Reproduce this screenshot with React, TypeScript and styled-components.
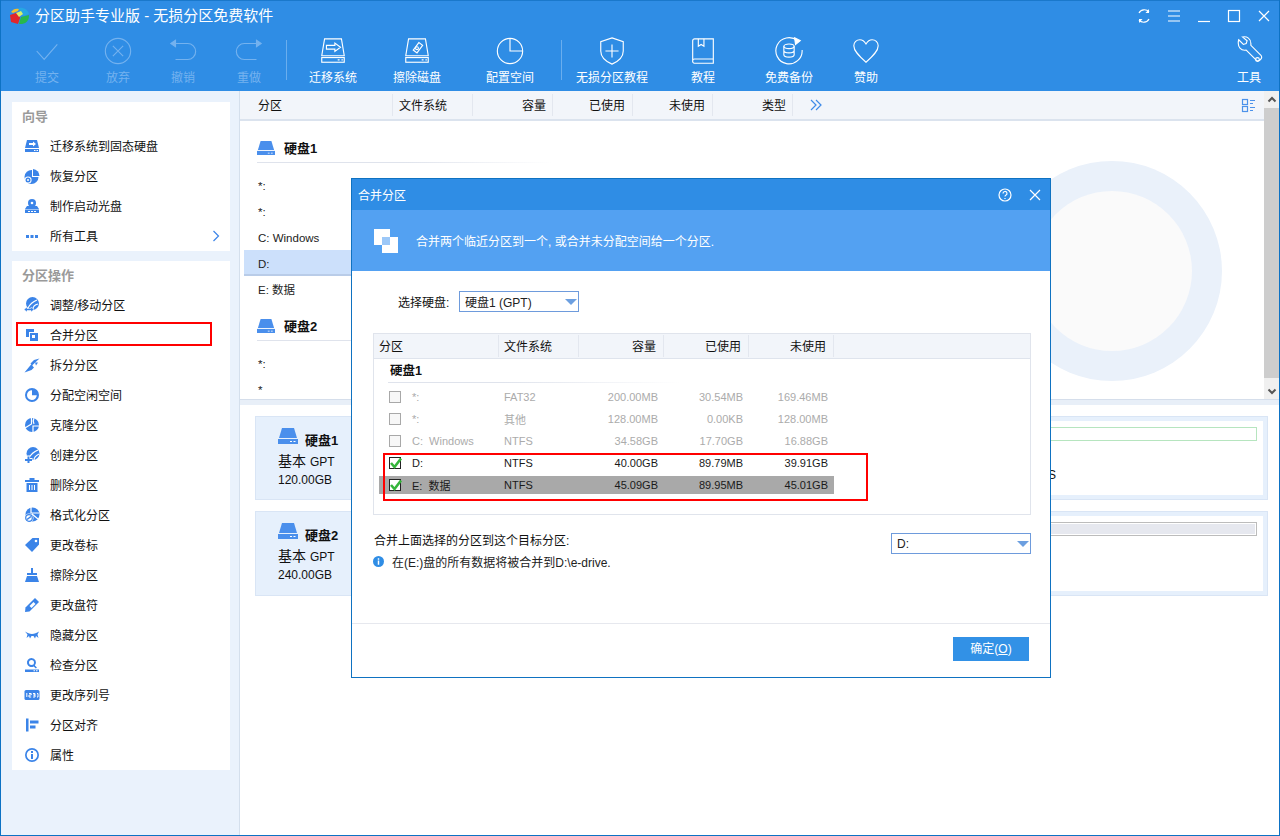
import React from 'react';
import styled, { createGlobalStyle } from 'styled-components';

const Global = createGlobalStyle`
  html, body { margin: 0; padding: 0; background: #fff; }
  * { box-sizing: border-box; }
  body { font-family: "Liberation Sans", "Noto Sans CJK SC", sans-serif; font-size: 12px; color: #111; }
`;

const Page = styled.div`
  position: relative; width: 1280px; height: 836px; overflow: hidden;
  display: flex; flex-direction: column; background: #fff;
  border-left: 1px solid #0d72c4; border-right: 1px solid #0d72c4; border-bottom: 1px solid #0d72c4;
`;
const Header = styled.header`
  height: 91px; flex: none; background: #2f8de5; border-top: 1px solid #1a78cb; color: #fff;
`;
const TitleRow = styled.div`display: flex; align-items: center; height: 30px; padding-left: 7px;`;
const Title = styled.div`font-size: 15px; margin-left: 5px; line-height: 30px; color: #fff;`;
const WindowControls = styled.div`display: flex; margin-left: auto; padding-right: 0;`;
const WindowButton = styled.div`width: 30px; height: 30px; display: flex; align-items: center; justify-content: center;`;
const Toolbar = styled.div`display: flex; align-items: flex-start; padding: 5px 0 0 11px;`;
const Tool = styled.div<{ $w: number; $off?: boolean; $ml?: number }>`
  width: ${p => p.$w}px; margin-left: ${p => p.$ml || 0}px; flex: none;
  display: flex; flex-direction: column; align-items: center;
  color: ${p => (p.$off ? '#74b2ef' : '#fff')};
`;
const ToolLabel = styled.div`margin-top: 4px; line-height: 16px; font-size: 12px; white-space: nowrap;`;
const ToolSep = styled.div`width: 1px; height: 40px; margin-top: 4px; flex: none; background: #6aaeee;`;
const ToolSpring = styled.div`flex: 1;`;

const Body = styled.div`flex: 1; display: flex; min-height: 0;`;
const Sidebar = styled.aside`
  width: 239px; flex: none; background: #eaf2fc; border-right: 1px solid #d4dfec; padding: 11px 0 0 11px;
  display: flex; flex-direction: column; gap: 10px;
`;
const SideCard = styled.section`width: 218px; background: #fff;`;
const SideTitle = styled.div`height: 29px; line-height: 30px; padding-left: 10px; font-size: 13px; font-weight: 700; color: #9a9a9a;`;
const SideRow = styled.div`
  position: relative; height: 30px; display: flex; align-items: center; padding-left: 12px; gap: 10px; color: #111; white-space: nowrap;
`;
const SideLabel = styled.span`margin-top: -2px;`;
const SideChevron = styled.span`margin-left: auto; margin-right: 8px; display: flex; color: #3b84e8;`;
const SideMark = styled.div`position: absolute; left: 4px; top: 2px; width: 196px; height: 24px; border: 2px solid #f00;`;

const Main = styled.main`flex: 1; display: flex; flex-direction: column; min-width: 0;`;
const ListArea = styled.div`height: 309px; flex: none; display: flex; border-bottom: 1px solid #d5deeb;`;
const ListLeft = styled.div`flex: 1; min-width: 0; display: flex; flex-direction: column;`;
const ColumnBar = styled.div`height: 30px; flex: none; display: flex; align-items: center; background: #f2f5fa; border-bottom: 2px solid #dbe3ee;`;
const ColumnCell = styled.div<{ $w: number; $right?: boolean; $pad: number }>`
  width: ${p => p.$w}px; height: 22px; line-height: 24px; flex: none; border-right: 1px solid #e3e7ef;
  text-align: ${p => (p.$right ? 'right' : 'left')};
  ${p => (p.$right ? `padding-right: ${p.$pad}px;` : `padding-left: ${p.$pad}px;`)}
`;
const ColumnMore = styled.div`margin-left: 16px; display: flex; color: #3f8be8;`;
const ColumnView = styled.div`margin-left: auto; margin-right: 8px; display: flex; color: #4c92ea;`;
const ListPane = styled.div`flex: 1; display: flex; min-height: 0; overflow: hidden;`;
const ListColumn = styled.div`flex: 1; padding: 17px 0 0 4px; min-width: 0;`;
const DiskHead = styled.div`
  height: 25px; margin-left: 13px; width: 295px; display: flex; align-items: flex-start; gap: 9px; position: relative;
  font-weight: 700; font-size: 13px; line-height: 22px;
  border-bottom: 1px solid; border-image: linear-gradient(90deg, #dfe3ec 50%, #fff) 1;
`;
const DiskHeadIcon = styled.span<{ $top?: number }>`display: flex; color: #4a8fec; margin-top: ${p => p.$top ?? 3}px;`;
const ListGroup = styled.div`margin: 9px 0 14px;`;
const ListRow = styled.div<{ $on?: boolean }>`
  height: 26px; line-height: 28px; padding-left: 14px; color: #222; font-size: 11.5px;
  ${p => p.$on && 'background: #cce0fb; border-bottom: 2px solid #b9cce8;'}
`;
const ChartWrap = styled.div`flex: none; margin: 40px 42px 0 0;`;

const ScrollBar = styled.div`width: 15px; flex: none; background: #f0f0f0; display: flex; flex-direction: column; color: #555;`;
const ScrollBtn = styled.div`height: 17px; display: flex; align-items: center; justify-content: center; flex: none;`;
const ScrollThumb = styled.div`flex: 1; background: #cdcdcd; margin-bottom: 4px;`;
const DiskCards = styled.div`
  flex: 1; padding: 11px 11px 0 15px; display: flex; flex-direction: column; gap: 11px;
  border-top: 5px solid #e8eff8; position: relative;
`;
const DiskCard = styled.div<{ $h: number }>`
  height: ${p => p.$h}px; display: flex; background: #e6f0fc; border: 1px solid #d9e5f5; padding: 4px 4px 4px 0;
`;
const DiskInfo = styled.div`width: 95px; flex: none; padding: 9px 0 0 22px;`;
const DiskName = styled.div`display: flex; align-items: flex-start; gap: 7px; font-size: 13px; font-weight: 700; line-height: 22px; color: #111;`;
const DiskType = styled.div`font-size: 14px; line-height: 19px; margin-top: 0; white-space: nowrap;`;
const DiskTypeLatin = styled.span`font-size: 12px; margin-left: 4px;`;
const DiskSize = styled.div`font-size: 12px; line-height: 16px;`;
const DiskMap = styled.div`flex: 1; background: #fff; padding: 6px 6px 0 0;`;
const Bar = styled.div<{ $grey?: boolean }>`
  height: 14px; border: 1px solid ${p => (p.$grey ? '#bcbcbc' : '#b6e5bf')};
  background: ${p => (p.$grey ? '#e6e8ef' : '#fff')};
  ${p => p.$grey && 'box-shadow: inset 0 0 0 1px #fff;'}
`;
const MapLabel = styled.div`text-align: right; padding-right: 201px; margin-top: 26px; line-height: 16px; font-size: 12px;`;

const Modal = styled.div`
  position: absolute; left: 350px; top: 178px; width: 700px; height: 500px;
  background: #fff; border: 1px solid #0f72c1; display: flex; flex-direction: column;
`;
const ModalTitle = styled.div`height: 31px; flex: none; background: #2f8de5; color: #fff; display: flex; align-items: center; padding-left: 6px; font-size: 12px;`;
const ModalActions = styled.div`margin-left: auto; display: flex; align-items: center; gap: 16px; padding-right: 8px;`;
const Banner = styled.div`height: 61px; flex: none; background: #53a1f2; color: #fff; display: flex; align-items: center; padding-left: 21px; gap: 17px; font-size: 12px;`;
const ModalBody = styled.div`padding: 20px 19px 0 21px; flex: 1;`;
const DiskPick = styled.div`display: flex; align-items: center; padding-left: 25px; height: 21px;`;
const PickLabel = styled.div`width: 61px; flex: none;`;
const Select = styled.div<{ $w: number }>`
  width: ${p => p.$w}px; height: 21px; border: 1px solid #6e9bdc; display: flex; align-items: center; padding: 0 1px 0 5px; color: #222; flex: none;
`;
const SelectCaret = styled.span`
  margin-left: auto; width: 0; height: 0; border-left: 6px solid transparent; border-right: 6px solid transparent; border-top: 6px solid #6c9fe0;
`;
const Table = styled.div`margin-top: 21px; width: 658px; height: 182px; border: 1px solid #e0e4ec;`;
const TableHead = styled.div`height: 25px; display: flex; align-items: center; background: #f2f5fa; border-bottom: 1px solid #dfe4ed;`;
const TableGroup = styled.div`
  height: 24px; margin-left: 14px; width: 292px; padding-left: 2px; line-height: 25px; font-weight: 700; font-size: 12.5px;
  border-bottom: 1px solid; border-image: linear-gradient(90deg, #dfe3ec 40%, #fff) 1;
`;
const TableRows = styled.div`margin: 5px 0 0 5px; width: 455px; display: flex; flex-direction: column; gap: 4px;`;
const TableRow = styled.div<{ $off?: boolean; $sel?: boolean }>`
  height: 18px; display: grid; grid-template-columns: 33px 92px 75px 85px 85px 85px; align-items: center; font-size: 11px;
  color: ${p => (p.$off ? '#ababab' : '#1a1a1a')};
  background: ${p => (p.$sel ? '#a9a9a9' : 'transparent')};
`;
const NameCell = styled.span`white-space: pre;`;
const CheckCell = styled.span`padding-left: 10px; display: flex;`;
const CheckBox = styled.span<{ $on?: boolean }>`
  width: 12px; height: 12px; display: block; position: relative; flex: none;
  border: 1px solid ${p => (p.$on ? '#222' : '#a8a8a8')}; background: ${p => (p.$on ? '#fff' : '#f7f7f7')};
`;
const CheckMark = styled.svg`position: absolute; left: -1px; top: -2px;`;
const NumCell = styled.span`text-align: right; padding-right: 6px;`;
const MergeRow = styled.div`margin-top: 18px; width: 658px; display: flex; justify-content: space-between; align-items: center; height: 21px; padding-left: 1px;`;
const MergeLabel = styled.span`margin-top: -9px;`;
const InfoRow = styled.div`display: flex; align-items: center; gap: 8px; height: 17px; margin-top: -1px; color: #222; font-size: 12px;`;
const ModalFooter = styled.div`height: 54px; flex: none; border-top: 1px solid #e6e8ee; display: flex; justify-content: flex-end; padding: 13px 21px 0 0;`;
const OkButton = styled.div`width: 76px; height: 24px; background: #3291e6; color: #fff; text-align: center; line-height: 24px;`;
const OkKey = styled.span`text-decoration: underline;`;
const DiskMark = styled.div`position: absolute; left: 31px; top: 274px; width: 485px; height: 48px; border: 2px solid #f00;`;

const Ico = styled.svg`display: block; flex: none;`;

const S = ({ children, size = 30, vb = 32 }: { children: React.ReactNode; size?: number; vb?: number }) => (
  <Ico width={size} height={size} viewBox={`0 0 ${vb} ${vb}`} fill="none" stroke="currentColor" strokeWidth={1.2}>{children}</Ico>
);

const DriveBase = () => (<>
  <path d="M7 3h18l3 18H4z" />
  <rect x="4" y="23" width="24" height="5" />
  <path d="M21 25.500h2M25 25.500h1.500" />
</>);

const toolIcons: Record<string, React.ReactNode> = {
  check: <S><path d="M5 16l8 9L27 9" /></S>,
  cancel: <S><circle cx="16" cy="16" r="13.500" /><path d="M10.500 10.500l11 11M21.500 10.500l-11 11" /></S>,
  undo: <S><path d="M8 8h13a8.500 8.500 0 0 1 0 17H8" /><path d="M8 4.500L3 8l5 3.500z" fill="currentColor" /></S>,
  redo: <S><path d="M24 8H11a8.500 8.500 0 0 0 0 17h13" /><path d="M24 4.500L29 8l-5 3.500z" fill="currentColor" /></S>,
  migrate: <S><DriveBase /><path d="M9 10h9V7.500l6 4.500-6 4.500V14H9z" /></S>,
  wipe: <S><DriveBase /><path d="M12 15l6-8 4 3-6 8z" /><circle cx="16" cy="13" r="1.500" /></S>,
  space: <S><circle cx="16" cy="16" r="13.500" /><path d="M16 2.500V16h13" /></S>,
  shield: <S><path d="M16 2l12 4v10c0 7-5 11-12 14C9 27 4 23 4 16V6z" /><path d="M16 9v14M9 16h14" /></S>,
  book: <S><path d="M5 28V5a2 2 0 0 1 2-2h20v26H7a2 2 0 0 1-2-2.500 2 2 0 0 1 2-2h20" /><path d="M11 3v8l3-2 3 2V3" /></S>,
  backup: <S><path d="M25 5a14 14 0 1 0 5 10" /><path d="M22 2l6 3-5 4z" fill="currentColor" /><ellipse cx="16" cy="11" rx="5.500" ry="2.500" /><path d="M10.500 11v9c0 3.300 11 3.300 11 0v-9M10.500 15.500c0 3.300 11 3.300 11 0" /></S>,
  heart: <S><path d="M16 28C8 21 3 16 3 10.500 3 6.500 6 4 9.500 4c3 0 5 2 6.500 4.500C17.500 6 19.500 4 22.500 4 26 4 29 6.500 29 10.500 29 16 24 21 16 28z" /></S>,
  tools: <S><path d="M5 4l5 5 3-1 1-3-5-4c5-1 9 2 9 7l-0 2 11 11c2 3-3 7-5 5L13 15c-5 1-10-3-8-11z" /><circle cx="25" cy="25" r="2" /></S>,
};

const fill = '#3b84e8';
const F = ({ children }: { children: React.ReactNode }) => (
  <Ico width={16} height={16} viewBox="0 0 16 16" fill={fill}>{children}</Ico>
);
const sideIcons: Record<string, React.ReactNode> = {
  drive: <F><path d="M3 2h10l2 8H1z" /><path d="M1 11h14v3H1z" /><path d="M5 5h4V3.500L12 6 9 8.500V7H5z" fill="#fff" /><path d="M10 12h1.500v1H10zM12.500 12H14v1h-1.500z" fill="#fff" /></F>,
  restore: <F><path d="M9 1a7 7 0 0 1 6.500 7H9z" /><path d="M8 2v7h6.500a7 7 0 1 1-6.500-7z" /><circle cx="4" cy="12" r="3.600" fill="#fff" /><circle cx="4" cy="12" r="2.500" /><circle cx="4" cy="12" r="1" fill="#fff" /></F>,
  boot: <F><circle cx="8" cy="5" r="4" /><circle cx="8" cy="5" r="1.300" fill="#fff" /><path d="M3 8h10l2 3H1z" /><path d="M1 11.500h14V15H1z" /><path d="M4 13h2v1H4zM7 13h2v1H7zM10 13h2v1h-2z" fill="#fff" /></F>,
  more: <F><path d="M2 7h3v3H2zM6.500 7h3v3h-3zM11 7h3v3h-3z" /></F>,
  resize: <F><circle cx="8.500" cy="6.500" r="6.500" /><path d="M4 11C6 7 8 5 13 3M9 12c0-2 1-4 5-5" stroke="#fff" strokeWidth="1.200" fill="none" /><path d="M0 12.500l3-2.500v1.500h4V10l3 2.500L7 15v-1.500H3V15z" stroke="#fff" strokeWidth=".5" /></F>,
  merge: <F><path d="M2 2h8v3H5v5H2z" /><path d="M6 6h8v8H6z" /><path d="M8 8h3v3H8z" fill="#fff" /></F>,
  split: <F><path d="M15.500 1.500L10 3 6.500 6.500 8 8.500z" /><path d="M9 9.500L7.500 7 .5 15.500 7.500 13 10 10.500z" /><path d="M11 5.500l3 0-2 3z" /></F>,
  alloc: <F><path fillRule="evenodd" d="M8 1a7 7 0 1 0 0 14A7 7 0 0 0 8 1zm0 2.200v5.100h4.800A4.900 4.900 0 1 1 8 3.200z" /></F>,
  clone: <F><circle cx="8" cy="8" r="7" /><path d="M7.500 0v7L1 11M9 15V9h6M10 1c-1 2-1 4 0 6" stroke="#fff" strokeWidth="1.200" fill="none" /></F>,
  create: <F><circle cx="9" cy="6.500" r="6.500" /><path d="M5 11C7 7 9 5 14 3M10 13c0-2 1-4 5-6" stroke="#fff" strokeWidth="1.200" fill="none" /><path d="M3 8.500h3v2.500h2.500v3H6v2.500H3V14H.5v-3H3z" fill="#fff" /><path d="M3.500 9.500h2V12H8v2H5.500v2h-2v-2H1v-2h2.500z" /></F>,
  del: <F><path d="M5.500 1h5v2H15v2H1V3h4.500z" /><path d="M2.500 6h11v9h-11z" /><path d="M5 8h1v5H5zM7.500 8h1v5h-1zM10 8h1v5h-1z" fill="#fff" /></F>,
  format: <F><circle cx="8.500" cy="7.500" r="7" /><path d="M7 0v6l8 0M8 7l6 5" stroke="#fff" strokeWidth="1.200" fill="none" /><circle cx="5" cy="11" r="4.500" fill="#fff" /><circle cx="5" cy="11" r="3.300" fill="none" stroke={fill} strokeWidth="1.200" /><path d="M2.500 12l4-3 1 1-4 3z" /></F>,
  label: <F><path d="M8.500 1H15v6.500L8 15 1 8z" /><circle cx="12" cy="4" r="1.300" fill="#fff" /></F>,
  brush: <F><path d="M7 1h2v5h4v2H3V6h4z" /><path d="M3 9h10l2 6H1z" /></F>,
  rename: <F><path d="M11 1l4 4-9.500 9.500L1 15l.500-4.500z" /><path d="M9.500 5l2 2-4 4-2-2z" fill="#fff" /></F>,
  hide: <F><path d="M1 4.500c2.500 1.500 4.500 2.500 7 2.500s4.500-1 7-2.500l-1.500 3 1 3.500-2.500-2-1 2.500-1.500-2.500H7.500L6 11.500 5 9l-2.500 2 1-3.500z" /></F>,
  inspect: <F><path fillRule="evenodd" d="M7.500 1a4.500 4.500 0 0 1 3.400 7.400l2 2-1 1-2.200-2A4.500 4.500 0 1 1 7.500 1zm0 2a2.500 2.500 0 1 0 0 5 2.500 2.500 0 0 0 0-5z" /><path d="M1 12.500h14V15H1z" /><path d="M9.500 13.300H11v1H9.500zM12 13.300h1.500v1H12z" fill="#fff" /></F>,
  serial: <Ico width={16} height={16} viewBox="0 0 16 16"><rect x="0.500" y="3" width="15" height="10" rx="1.500" fill={fill} /><path d="M2.800 6v4M5 6.500h2.200v1.500H5v2h2.200M9 6.500h2v1.500H9.500 11v2H9M13 6.500h1v3.500h-1" stroke="#fff" strokeWidth="1" fill="none" /></Ico>,
  align: <F><path d="M2 1.500h2.500v13H2zM6 3.500h8.500v3H6zM6 8.500h5.500v3H6z" /></F>,
  info: <F><path fillRule="evenodd" d="M8 1a7 7 0 1 0 0 14A7 7 0 0 0 8 1zm0 1.700a5.300 5.300 0 1 1 0 10.600A5.300 5.300 0 0 1 8 2.700z" /><path d="M7 4h2v2H7zM7 7h2v5H7z" /></F>,
};

const Logo = () => (
  <Ico width={22} height={18} viewBox="0 0 22 18">
    <path d="M2 8l9-3 1 6-2 6-7-2z" fill="#e2262b" />
    <path d="M3 5c2-3 5-4 8-3l-1 2-5 2z" fill="#f2c12e" />
    <path d="M10 1c6-1 10 2 11 6l-6 2-3-5z" fill="#27a7e3" />
    <path d="M13 10l8-2c0 5-2 8-7 9l-3 0z" fill="#27b84c" />
    <path d="M8 6l5-2 2 3-4 3z" fill="#d9f06b" />
  </Ico>
);

const DriveGlyph = ({ w = 18 }: { w?: number }) => (
  <Ico width={w} height={w * 0.8} viewBox="0 0 20 16" fill="currentColor">
    <path d="M4 0h12l3 10H1z" />
    <path d="M0 11h20v5H0z" />
    <path d="M12 13h2v1h-2zM15.500 13h2v1h-2z" fill="#fff" />
  </Ico>
);

const tools = [
  { l: '提交', i: 'check', w: 70, off: true },
  { l: '放弃', i: 'cancel', w: 72, off: true },
  { l: '撤销', i: 'undo', w: 58, off: true },
  { l: '重做', i: 'redo', w: 74, off: true },
  'sep',
  { l: '迁移系统', i: 'migrate', w: 92 },
  { l: '擦除磁盘', i: 'wipe', w: 76 },
  { l: '配置空间', i: 'space', w: 102, ml: 4 },
  'sep',
  { l: '无损分区教程', i: 'shield', w: 100 },
  { l: '教程', i: 'book', w: 82 },
  { l: '免费备份', i: 'backup', w: 90 },
  { l: '赞助', i: 'heart', w: 64 },
] as const;

const guide = [['drive', '迁移系统到固态硬盘'], ['restore', '恢复分区'], ['boot', '制作启动光盘'], ['more', '所有工具']];
const ops = [
  ['resize', '调整/移动分区'], ['merge', '合并分区'], ['split', '拆分分区'], ['alloc', '分配空闲空间'],
  ['clone', '克隆分区'], ['create', '创建分区'], ['del', '删除分区'], ['format', '格式化分区'],
  ['label', '更改卷标'], ['brush', '擦除分区'], ['rename', '更改盘符'], ['hide', '隐藏分区'],
  ['inspect', '检查分区'], ['serial', '更改序列号'], ['align', '分区对齐'], ['info', '属性'],
];
const mainCols = [
  { t: '分区', w: 153, pad: 18 }, { t: '文件系统', w: 80, pad: 6 }, { t: '容量', w: 80, right: true, pad: 6 },
  { t: '已使用', w: 80, right: true, pad: 7 }, { t: '未使用', w: 80, right: true, pad: 7 }, { t: '类型', w: 80, right: true, pad: 6 },
];
const dlgCols = [
  { t: '分区', w: 125, pad: 5 }, { t: '文件系统', w: 80, pad: 5 }, { t: '容量', w: 85, right: true, pad: 7 },
  { t: '已使用', w: 85, right: true, pad: 7 }, { t: '未使用', w: 85, right: true, pad: 7 },
];
const dlgRows = [
  { n: '*:', f: 'FAT32', a: '200.00MB', b: '30.54MB', c: '169.46MB', off: true },
  { n: '*:', f: '其他', a: '128.00MB', b: '0.00KB', c: '128.00MB', off: true },
  { n: 'C:  Windows', f: 'NTFS', a: '34.58GB', b: '17.70GB', c: '16.88GB', off: true },
  { n: 'D:', f: 'NTFS', a: '40.00GB', b: '89.79MB', c: '39.91GB', on: true },
  { n: 'E:  数据', f: 'NTFS', a: '45.09GB', b: '89.95MB', c: '45.01GB', on: true, sel: true },
];

export default function App() {
  return (
    <Page>
      <Global />
      <Header>
        <TitleRow>
          <Logo />
          <Title>分区助手专业版 - 无损分区免费软件</Title>
          <WindowControls>
            <WindowButton><S size={16} vb={16}><path d="M3 5a6 6 0 0 1 10-1M13 11a6 6 0 0 1-10 1" /><path d="M13 1v4H9.500zM3 15v-4h3.500z" fill="currentColor" stroke="none" /></S></WindowButton>
            <WindowButton><S size={14} vb={14}><path d="M1 2h12M1 7h12M1 12h12" /></S></WindowButton>
            <WindowButton><S size={14} vb={14}><path d="M1 12.500h12" /></S></WindowButton>
            <WindowButton><S size={14} vb={14}><rect x="1.500" y="1.500" width="11" height="11" /></S></WindowButton>
            <WindowButton><S size={14} vb={14}><path d="M2 2l10 10M12 2L2 12" /></S></WindowButton>
          </WindowControls>
        </TitleRow>
        <Toolbar>
          {tools.map((t, i) => t === 'sep' ? <ToolSep key={i} /> : (
            <Tool key={t.l} $w={t.w} $off={'off' in t} $ml={'ml' in t ? t.ml : 0}>
              {toolIcons[t.i]}
              <ToolLabel>{t.l}</ToolLabel>
            </Tool>
          ))}
          <ToolSpring />
          <Tool $w={60}>{toolIcons.tools}<ToolLabel>工具</ToolLabel></Tool>
        </Toolbar>
      </Header>
      <Body>
        <Sidebar>
          <SideCard>
            <SideTitle>向导</SideTitle>
            {guide.map(([i, t]) => (
              <SideRow key={t}>{sideIcons[i]}<SideLabel>{t}</SideLabel>
                {i === 'more' && <SideChevron><S size={12} vb={12}><path d="M3.500 1l5 5-5 5" /></S></SideChevron>}
              </SideRow>
            ))}
          </SideCard>
          <SideCard>
            <SideTitle>分区操作</SideTitle>
            {ops.map(([i, t]) => (
              <SideRow key={t}>{sideIcons[i]}<SideLabel>{t}</SideLabel>{i === 'merge' && <SideMark />}</SideRow>
            ))}
          </SideCard>
        </Sidebar>
        <Main>
          <ListArea>
            <ListLeft>
              <ColumnBar>
                {mainCols.map(c => <ColumnCell key={c.t} $w={c.w} $right={c.right} $pad={c.pad}>{c.t}</ColumnCell>)}
                <ColumnMore><S size={14} vb={14}><path d="M2 2l5 5-5 5M7 2l5 5-5 5" /></S></ColumnMore>
                <ColumnView><S size={15} vb={15}><rect x="1.500" y="1.500" width="5" height="5" /><rect x="1.500" y="8.500" width="5" height="5" /><path d="M9 2.500h5M9 5.500h3M9 9.500h5M9 12.500h3" /></S></ColumnView>
              </ColumnBar>
              <ListPane>
                <ListColumn>
                  <DiskHead><DiskHeadIcon><DriveGlyph /></DiskHeadIcon>硬盘1</DiskHead>
                  <ListGroup>
                    <ListRow>*:</ListRow>
                    <ListRow>*:</ListRow>
                    <ListRow>C: Windows</ListRow>
                    <ListRow $on>D:</ListRow>
                    <ListRow>E: 数据</ListRow>
                  </ListGroup>
                  <DiskHead><DiskHeadIcon><DriveGlyph /></DiskHeadIcon>硬盘2</DiskHead>
                  <ListGroup>
                    <ListRow>*:</ListRow>
                    <ListRow>*</ListRow>
                  </ListGroup>
                </ListColumn>
                <ChartWrap>
                  <svg width="220" height="220" viewBox="0 0 220 220">
                    <circle cx="110" cy="110" r="110" fill="#eaf1fa" />
                    <circle cx="110" cy="110" r="80" fill="#fafafa" />
                  </svg>
                </ChartWrap>
              </ListPane>
            </ListLeft>
            <ScrollBar>
              <ScrollBtn><S size={10} vb={10}><path d="M1.500 6.500L5 3l3.500 3.500" strokeWidth={2} /></S></ScrollBtn>
              <ScrollThumb />
              <ScrollBtn><S size={10} vb={10}><path d="M1.500 3.500L5 7l3.500-3.500" strokeWidth={2} /></S></ScrollBtn>
            </ScrollBar>
          </ListArea>
          <DiskCards>
            <DiskCard $h={84}>
              <DiskInfo>
                <DiskName><DiskHeadIcon $top={-2}><DriveGlyph w={20} /></DiskHeadIcon>硬盘1</DiskName>
                <DiskType>基本<DiskTypeLatin>GPT</DiskTypeLatin></DiskType>
                <DiskSize>120.00GB</DiskSize>
              </DiskInfo>
              <DiskMap><Bar /><MapLabel>NTFS</MapLabel></DiskMap>
            </DiskCard>
            <DiskCard $h={85}>
              <DiskInfo>
                <DiskName><DiskHeadIcon $top={-2}><DriveGlyph w={20} /></DiskHeadIcon>硬盘2</DiskName>
                <DiskType>基本<DiskTypeLatin>GPT</DiskTypeLatin></DiskType>
                <DiskSize>240.00GB</DiskSize>
              </DiskInfo>
              <DiskMap><Bar $grey /></DiskMap>
            </DiskCard>
          </DiskCards>
        </Main>
      </Body>

      <Modal>
        <ModalTitle>合并分区
          <ModalActions>
            <S size={14} vb={14}><circle cx="7" cy="7" r="6" /><path d="M5 5.500a2 2 0 1 1 2.800 1.800c-.6.3-.8.6-.8 1.200M7 10v1" /></S>
            <S size={14} vb={14}><path d="M2 2l10 10M12 2L2 12" /></S>
          </ModalActions>
        </ModalTitle>
        <Banner>
          <Ico width={26} height={26} viewBox="0 0 26 26" fill="#fff">
            <path d="M1 1h16v8H9v8H1z" />
            <path d="M17 9h8v16H9v-8h8z" />
            <path d="M9 9h8v8H9z" fill="#9cc8f8" />
          </Ico>
          合并两个临近分区到一个, 或合并未分配空间给一个分区.
        </Banner>
        <ModalBody>
          <DiskPick>
            <PickLabel>选择硬盘:</PickLabel>
            <Select $w={120}>硬盘1 (GPT)<SelectCaret /></Select>
          </DiskPick>
          <Table>
            <TableHead>
              {dlgCols.map(c => <ColumnCell key={c.t} $w={c.w} $right={c.right} $pad={c.pad}>{c.t}</ColumnCell>)}
            </TableHead>
            <TableGroup>硬盘1</TableGroup>
            <TableRows>
              {dlgRows.map(r => (
                <TableRow key={r.a + r.n} $off={r.off} $sel={r.sel}>
                  <CheckCell>
                    <CheckBox $on={r.on}>
                      {r.on && <CheckMark width="14" height="14" viewBox="0 0 14 14"><path d="M2 7l3.500 4L12 2.500" stroke="#35b53b" strokeWidth="2.600" fill="none" /></CheckMark>}
                    </CheckBox>
                  </CheckCell>
                  <NameCell>{r.n}</NameCell>
                  <span>{r.f}</span>
                  <NumCell>{r.a}</NumCell>
                  <NumCell>{r.b}</NumCell>
                  <NumCell>{r.c}</NumCell>
                </TableRow>
              ))}
            </TableRows>
          </Table>
          <MergeRow>
            <MergeLabel>合并上面选择的分区到这个目标分区:</MergeLabel>
            <Select $w={140}>D:<SelectCaret /></Select>
          </MergeRow>
          <InfoRow>
            <Ico width={11} height={11} viewBox="0 0 12 12"><circle cx="6" cy="6" r="6" fill="#2f8de5" /><path d="M5.200 2.500h1.600v1.600H5.200zM5.200 5h1.600v4.500H5.200z" fill="#fff" /></Ico>
            在(E:)盘的所有数据将被合并到D:\e-drive.
          </InfoRow>
        </ModalBody>
        <ModalFooter><OkButton>确定(<OkKey>O</OkKey>)</OkButton></ModalFooter>
        <DiskMark />
      </Modal>
    </Page>
  );
}
